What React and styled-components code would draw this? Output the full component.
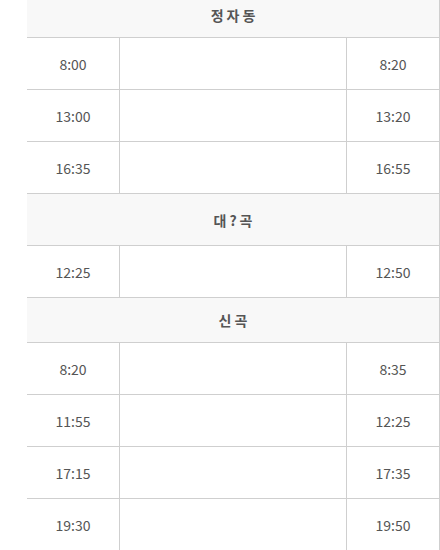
import React from "react";
import styled, { createGlobalStyle } from "styled-components";

const Global = createGlobalStyle`
  html, body { margin: 0; padding: 0; background: #fff; }
  body { font-family: "Noto Sans CJK KR", "Noto Sans", sans-serif; overflow: hidden; }
`;

const Page = styled.div`
  margin-top: -7px;
  padding-left: 27px;
`;

const Table = styled.div`
  width: 413px;
  box-sizing: border-box;
  border-right: 1px solid #cfcfcf;
  display: flex;
  flex-direction: column;
`;

const Header = styled.div`
  height: ${(p) => p.$h}px;
  box-sizing: border-box;
  border-bottom: 1px solid #cfcfcf;
  background: #f8f8f8;
  display: flex;
  align-items: center;
  justify-content: center;
  font-size: 14px;
  font-weight: 700;
  color: #555;
  letter-spacing: 3px;
  padding-left: 3px;
`;

const Row = styled.div`
  height: 52px;
  box-sizing: border-box;
  border-bottom: 1px solid #cfcfcf;
  display: grid;
  grid-template-columns: 92px 227px 93px;
`;

const Cell = styled.div`
  box-sizing: border-box;
  border-left: ${(p) => (p.$first ? "none" : "1px solid #cfcfcf")};
  display: flex;
  align-items: center;
  justify-content: center;
  font-size: 14px;
  color: #555;
`;

const data = [
  { name: "정자동", h: 45, rows: [["8:00", "8:20"], ["13:00", "13:20"], ["16:35", "16:55"]] },
  { name: "대?곡", h: 52, rows: [["12:25", "12:50"]] },
  { name: "신곡", h: 45, rows: [["8:20", "8:35"], ["11:55", "12:25"], ["17:15", "17:35"], ["19:30", "19:50"]] },
];

export default function App() {
  return (
    <Page>
      <Global />
      <Table>
        {data.map((s) => (
          <React.Fragment key={s.name}>
            <Header $h={s.h}>{s.name}</Header>
            {s.rows.map(([a, b], i) => (
              <Row key={i}>
                <Cell $first>{a}</Cell>
                <Cell></Cell>
                <Cell>{b}</Cell>
              </Row>
            ))}
          </React.Fragment>
        ))}
      </Table>
    </Page>
  );
}
